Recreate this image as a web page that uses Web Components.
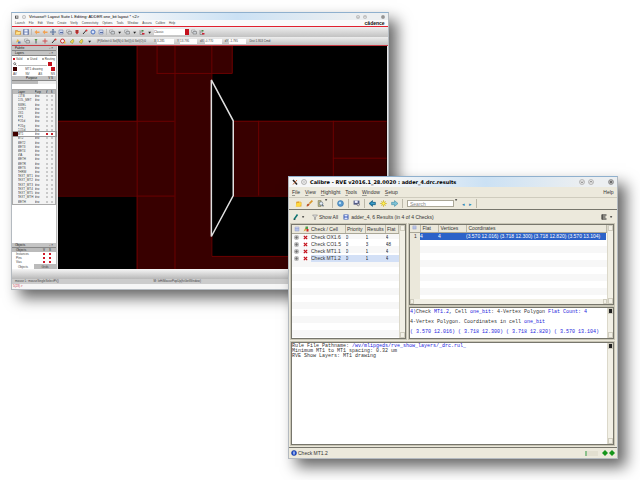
<!DOCTYPE html>
<html lang="en">
<head>
<meta charset="utf-8">
<title>Calibre RVE</title>
<style>
    body{
        margin:0;
        min-height:100vh;
        background:#fff;
        overflow:hidden;
    }
</style>
</head>
<body>
<desk-top></desk-top>

<script>
const BASE = `
    *{box-sizing:border-box;}
    button,input,select{
        font:inherit;
        color:inherit;
        margin:0;
        padding:0;
        border:0;
        background:none;
        border-radius:0;
        appearance:none;
        min-width:0;
        white-space:nowrap;
    }
    table{border-collapse:collapse;border-spacing:0;}
    th,td{padding:0;font-weight:normal;text-align:left;white-space:nowrap;overflow:hidden;}
`;

const ICONS = {
    ring: '<circle cx="6" cy="6" r="5" fill="#eee" stroke="#777"/><circle cx="6" cy="6" r="2" fill="#ccc"/>',
    folder: '<path d="M1 3h4l1 2h5v6H1z" fill="#f0b84c" stroke="#c07a20"/><path d="M3 6h8l-2 5H1z" fill="#ffe28a"/>',
    disk: '<path d="M1 1h10v10H1z" fill="#7f93c4" stroke="#44558a"/><path d="M3 1h6v4H3zM3 7h6v4H3z" fill="#edf1fa"/>',
    back: '<path d="M1 6l5-4v3h5v3H6v3z" fill="#f2a150"/>',
    move: '<path d="M6 0v12M0 6h12" stroke="#56709c" stroke-width="2"/><path d="M4 3l2-3 2 3M4 9l2 3 2-3" fill="none" stroke="#56709c"/>',
    box: '<path d="M2 2h8v8H2z" fill="#cfd8ee" stroke="#6377a5"/><path d="M4 7h6" stroke="#5a6fa4" stroke-width="2"/>',
    pin: '<path d="M3 2h6v5l-3 4-3-4z" fill="#c8202a"/><path d="M5 3h2v4H5z" fill="#753"/>',
    pencil: '<path d="M2 10L9 2" stroke="#333" stroke-width="2"/><circle cx="9" cy="3" r="2" fill="#d33"/>',
    round: '<circle cx="6" cy="6" r="4" fill="#d9e4fa" stroke="#4a70c0" stroke-width="2"/>',
    layers: '<path d="M1 2h7v5H1z" fill="#e3e6ea" stroke="#888"/><path d="M4 5h7v5H4z" fill="#cdd2d8" stroke="#666"/>',
    tree: '<path d="M2 2v9h7M2 6h6" fill="none" stroke="#666"/><path d="M6 8h5v3H6z" fill="#c23"/><path d="M5 2h4v3H5z" fill="#4a8a4a"/>',
    clock: '<circle cx="5" cy="6" r="4" fill="#f4f4f4" stroke="#c33" stroke-width="2"/><path d="M8 7h3v4H8z" fill="#e6ba3a"/>',
    flag: '<path d="M2 8l6-6 2 4-3 5z" fill="#f0d24c" stroke="#7b8a3c"/>',
    plant: '<path d="M6 11V5" stroke="#556" stroke-width="2"/><path d="M3 2h6l-3 5z" fill="#5b9a50"/>',
    shape: '<path d="M2 9l3-7 5 5z" fill="#e8bd52"/><path d="M6 7h5v4H6z" fill="#5b78b8"/>',
    plus: '<path d="M6 1v10M1 6h10" stroke="#c55" stroke-width="2"/>',
    open: '<path d="M2 3l6-1 3 2v7H2z" fill="#e2a12a"/><path d="M1 11l2-6h8l-2 6z" fill="#ffd93d"/><path d="M7 1l3 3-2 1z" fill="#fff4a8"/>',
    brush: '<path d="M6 6l5-5" stroke="#d8972c" stroke-width="3"/><path d="M1 11c0-4 2-5 5-5 1 3-2 5-5 5z" fill="#b9542b"/>',
    find: '<path d="M2 1h5v10H2z" fill="#b9b98a" stroke="#77724e"/><circle cx="7" cy="6" r="3" fill="#e6eef6" stroke="#567"/><path d="M9 8l2 3" stroke="#567" stroke-width="2"/>',
    info: '<circle cx="6" cy="6" r="5" fill="#5b9cd0" stroke="#2e6da6"/><circle cx="5" cy="5" r="2" fill="#b9dcf4"/>',
    save: '<path d="M1 1h10v7H1z" fill="#515a86"/><path d="M3 1h5v4H3z" fill="#eef"/><circle cx="9" cy="8" r="2" fill="#dde" stroke="#555"/>',
    left: '<path d="M0 6l6-5v3h5v4H6v3z" fill="#1d7fae" stroke="#0f567b"/><path d="M3 6l3-2v1h4v1z" fill="#63c1e4"/>',
    sun: '<path d="M6 0v12M0 6h12M2 2l8 8M10 2l-8 8" stroke="#d2b013"/><circle cx="6" cy="6" r="3" fill="#fff25a" stroke="#c3a516"/>',
    right: '<path d="M12 6L6 1v3H1v4h5v3z" fill="#7cc2d6" stroke="#418ca5"/>',
    marker: '<path d="M2 11L9 1" stroke="#0c7270" stroke-width="3"/><path d="M1 11h4" stroke="#111"/>',
    funnel: '<path d="M1 2h10L7 6v5H5V6z" fill="#ddd" stroke="#777"/>',
    cell: '<path d="M1 1h10v10H1z" fill="#3858b5"/><path d="M3 2h6v3H3zM3 7h6v3H3z" fill="#dfe7ff"/>',
    menu: '<path d="M2 1v10M2 2h9M2 6h7M2 10h9" stroke="#222" stroke-width="2" fill="none"/>',
    expand: '<path d="M2 2h8v8H2z" fill="#ddd" stroke="#555"/><path d="M6 2v8M2 6h8" stroke="#333"/>',
    cross: '<path d="M2 2l8 8M10 2l-8 8" stroke="#c5121c" stroke-width="3"/>',
    sheet: '<path d="M2 2h8v8H2z" fill="#cbd5f2" stroke="#95a0cc"/><path d="M2 5h8M2 8h8" stroke="#8190c5"/>',
    mixed: '<path d="M1 11l4-8 2 5z" fill="#d9a33a"/><path d="M5 1h5v5H5z" fill="#4a9a4a"/><path d="M7 6h4v5H7z" fill="#c22"/>',
    status: '<circle cx="6" cy="6" r="5" fill="#1f4fd0" stroke="#0e2f88"/><path d="M6 3v6" stroke="#fff" stroke-width="2"/>',
    diamond: '<path d="M6 0l6 6-6 6-6-6z" fill="#15951b"/>',
    down: '<path d="M3 4h7L6 9z" fill="#222"/>',
    min: '<circle cx="6" cy="6" r="5" fill="#e6e6e6" stroke="#888"/><path d="M4 5l2 3 2-3" fill="none" stroke="#444"/>',
    max: '<circle cx="6" cy="6" r="5" fill="#e6e6e6" stroke="#888"/><path d="M4 7l2-3 2 3" fill="none" stroke="#444"/>',
    close: '<circle cx="6" cy="6" r="5" fill="#b4b4b4" stroke="#666"/><path d="M4 4l4 4M8 4l-4 4" stroke="#222"/>',
    app: '<path d="M0 2h10v9H0z" fill="#555"/><path d="M3 4h5v4H3z" fill="#ddd"/>',
    calibre: '<path d="M2 2l8 9" stroke="#222" stroke-width="3"/><path d="M10 2l-8 9" stroke="#c66a3a" stroke-width="2"/>',
    lens: '<circle cx="5" cy="5" r="3" fill="none" stroke="#444" stroke-width="2"/><path d="M7 7l4 4" stroke="#444" stroke-width="2"/>'
};

class IconGlyph extends HTMLElement {

    constructor() {
        super();
        this.shadow = this.attachShadow({mode: 'open'});
    }

    connectedCallback() {
        this.shadow.innerHTML = `
        <style>
            :host{display:inline-block;width:6px;height:6px;flex:none;}
            svg{display:block;width:100%;height:100%;}
        </style>
        <svg viewBox="0 0 12 12" aria-hidden="true">${ICONS[this.getAttribute('name')] || ''}</svg>`;
    }
}
customElements.define('icon-glyph', IconGlyph);

const iconButtons = (names) => names.split(' ').map(n => n === '|' ? '<span class="sep"></span>' :
    `<button aria-label="${n}"${n === 'down' ? ' class="drop"' : ''}><icon-glyph name="${n}"></icon-glyph></button>`).join('');

class MenuBar extends HTMLElement {

    constructor() {
        super();
        this.shadow = this.attachShadow({mode: 'open'});
    }

    connectedCallback() {
        const items = this.getAttribute('items').split(' ');
        const mark = this.hasAttribute('underline');
        this.shadow.innerHTML = `
        <style>
            ${BASE}
            :host{display:flex;align-items:center;gap:var(--menu-gap,4px);}
            u{text-decoration-thickness:1px;text-decoration-color:#9a9890;}
            .end{margin-left:auto;}
        </style>
        ${items.map(i => `<button>${mark ? `<u>${i[0]}</u>${i.slice(1)}` : i}</button>`).join('')}
        <span class="end"><slot></slot></span>`;
    }
}
customElements.define('menu-bar', MenuBar);

class AppWindow extends HTMLElement {

    constructor() {
        super();
        this.shadow = this.attachShadow({mode: 'open'});
        this.shadow.innerHTML = `
        <style>
            ${BASE}
            :host{
                display:flex;
                flex-direction:column;
                box-shadow:8px 8px 14px rgba(0,0,0,.6);
                border:1px solid #b4bac0;
                border-top-color:#8fb0ce;
                font-family:"Liberation Sans",sans-serif;
            }
            header{
                display:flex;
                align-items:center;
                gap:3px;
                flex:none;
                height:var(--title-height);
                padding:0 3px;
                color:#000;
                background:linear-gradient(90deg,#f6f7f8 0 30%,#cbe1f4 60%,#eceff1 90%);
            }
            .title{flex:1;white-space:nowrap;}
            .body{flex:1;min-height:0;display:flex;flex-direction:column;}
            button{display:flex;}
            button icon-glyph{width:var(--control,6px);height:var(--control,6px);}
            .wide{width:8px;}
        </style>
        <header>
            <slot name="icon"></slot>
            <span class="title"><slot name="title"></slot></span>
            ${iconButtons('min max')}<span class="wide"></span>${iconButtons('close')}
        </header>
        <div class="body"><slot></slot></div>`;
    }
}
customElements.define('app-window', AppWindow);

class LayoutCanvas extends HTMLElement {

    constructor() {
        super();
        this.shadow = this.attachShadow({mode: 'open'});
        this.shadow.innerHTML = `
        <style>
            :host{display:block;flex:1;min-width:0;background:#000;}
            svg{display:block;width:100%;height:100%;}
        </style>
        <svg viewBox="0 0 330 224" preserveAspectRatio="none">
            <path fill="#380000" d="M79 0h96v27h-21v184h176v13H79V150H0V75h79zM176 75h154v75H176z"/>
            <g fill="none" stroke="#6c0000">
                <path d="M79.500 0v224M117.500 0v224M99.500 0v27.500M154.500 0v27M99 27.500h76V0"/>
                <path d="M0 75.500h117M0 150.500h117M176 75.500h154M176 150.500h154M201.500 75v75M276.500 75v75M276 112.500h54M154.500 27v184h176"/>
            </g>
            <path fill="#000" stroke="#e0e0e0" stroke-width="1.500" d="M154 34l22 41v75l-22 41z"/>
        </svg>`;
    }
}
customElements.define('layout-canvas', LayoutCanvas);

class LayerPalette extends HTMLElement {

    constructor() {
        super();
        this.shadow = this.attachShadow({mode: 'open'});
        this.render();
    }

    render() {
        const layers = ['L1TB', 'COL_MET', 'NWEL', 'CONT', 'OX1', 'PP1', 'PO1d', 'PO1g', 'CO1d', 'MT1', 'MT2',
            'MET2', 'MET3', 'MET4', 'VIA', 'METH', 'METR', 'METS', 'THRM', 'TEXT_MT1', 'TEXT_MT2', 'TEXT_MT3',
            'TEXT_MT4', 'TEXT_MT5', 'TEXT_MTH', 'METH'];
        this.shadow.innerHTML = `
        <style>
            ${BASE}
            :host{
                display:flex;
                flex-direction:column;
                width:45px;
                flex:none;
                color:#444;
                background:#fff;
                border-right:1px solid #bbb;
                line-height:4px;
            }
            h2{
                display:flex;
                justify-content:space-between;
                margin:0;
                height:5px;
                padding:0 3px;
                font-size:3px;
                font-weight:normal;
                color:#111;
                background:#c4c4c4;
                border-bottom:1px solid #888;
                flex:none;
            }
            .row{display:flex;align-items:center;justify-content:space-between;gap:1px;height:5px;padding:0 1px;flex:none;}
            .find{padding-right:4px;}
            label{display:flex;align-items:center;gap:1px;}
            input[type=checkbox]{width:2px;height:2px;background:#aaa;}
            input[type=checkbox]:checked{background:#d01828;}
            .red{width:4px;height:4px;background:#c4101c;}
            .swatch{width:4px;height:4px;background:#400000;}
            input[type=search]{flex:1;height:4px;border-bottom:1px solid #bbb;}
            .tabs{background:linear-gradient(90deg,#bbb 60%,#eee 0);height:3px;}
            .gap{height:5px;flex:none;}
            table{width:100%;table-layout:fixed;}
            .layers{height:116px;border:1px solid #aaa;}
            .layers tr{background:#f3f3f3;}
            .layers thead tr,.objects thead tr{background:#bbb;color:#222;}
            .layers tr.on{background:#fff;outline:1px solid #999;}
            .on .pick{background:#c8202a;}
            .on .key{background:#400000;}
            .pick{width:2px;height:2px;background:#c9c9c9;}
            .space{flex:1;}
            .objects td,.objects th{height:4px;padding-left:4px;}
            .objects th+th{padding-left:1px;}
            .objects td+td{padding-left:1px;}
            .foot{display:flex;height:5px;}
            .foot button{flex:1;}
            .foot button+button{background:#bbb;}
        </style>
        <h2><span>Palette</span><span>▫ ×</span></h2>
        <h2><span>Layers</span><span>▫ ×</span></h2>
        <div class="row">
            <label><input type="checkbox" checked>Valid</label>
            <label><input type="checkbox">Used</label>
            <label><input type="checkbox">Routing</label>
        </div>
        <div class="row find"><icon-glyph name="lens" style="width:4px;height:4px"></icon-glyph><input type="search" aria-label="Layer filter"><button class="red" aria-label="Filter"></button></div>
        <div class="row"><span class="swatch"></span><span>MT1 drawing</span><button class="red" aria-label="Layer"></button></div>
        <div class="row"><button>AV</button><button>NV</button><button>AS</button><button>NS</button></div>
        <h2><span></span><span>Purpose</span><span>V S</span></h2>
        <div class="row tabs"></div>
        <div class="gap"></div>
        <table class="layers">
            <colgroup><col style="width:5px"><col><col style="width:11px"><col style="width:5px"><col style="width:5px"></colgroup>
            <thead><tr><th></th><th>Layer</th><th>Purp</th><th>V</th><th>S</th></tr></thead>
            <tbody>${layers.map(n => `<tr${n === 'MT1' ? ' class="on"' : ''}><td class="key"></td><td>${n}</td><td>drw</td><td><div class="pick"></div></td><td><div class="pick"></div></td></tr>`).join('')}</tbody>
        </table>
        <div class="space"></div>
        <h2><span>Objects</span><span>▫ ×</span></h2>
        <table class="objects">
            <colgroup><col><col style="width:6px"><col style="width:8px"></colgroup>
            <thead><tr><th>Objects</th><th>V</th><th>S</th></tr></thead>
            <tbody>
                ${['Instances', 'Pins', 'Vias'].map(n => `<tr><td>${n}</td>${'V S'.split(' ').map(c => `<td><input type="checkbox" checked aria-label="${n} ${c}" style="display:block"></td>`).join('')}</tr>`).join('')}
            </tbody>
        </table>
        <div class="foot"><button>Objects</button><button>Grids</button></div>`;
    }
}
customElements.define('layer-palette', LayerPalette);

class LayoutEditor extends HTMLElement {

    constructor() {
        super();
        this.shadow = this.attachShadow({mode: 'open'});
        this.render();
    }

    render() {
        this.shadow.innerHTML = `
        <style>
            ${BASE}
            :host{
                display:flex;
                flex-direction:column;
                flex:1;
                min-height:0;
                font-size:3px;
                color:#444;
                background:#e6e6e6;
            }
            menu-bar{height:7px;padding:0 3px;--menu-gap:4px;background:#fafafa;border-bottom:1px solid #e0202f;flex:none;}
            .logo{font-weight:bold;color:#111;font-size:5px;}
            .tools{
                display:flex;
                align-items:center;
                gap:2px;
                height:10px;
                padding:0 3px;
                background:linear-gradient(#eee,#c2c2c2);
                flex:none;
                white-space:nowrap;
            }
            .sep{width:1px;height:6px;background:#bbb;}
            .tools.second{height:9px;gap:3px;border-bottom:1px solid #c93a44;}
            .tools button{display:flex;}
            .tools .drop icon-glyph{width:5px;height:5px;}
            .counts{margin:0 5px 0 2px;}
            select{width:35px;height:6px;background:#fff;border-right:4px solid #c4101c;}
            label{display:flex;align-items:center;gap:1px;}
            label input{width:17px;height:5px;background:#fff;}
            .main{display:flex;flex:1;min-height:0;}
            layout-canvas{margin:0 1px;}
            .scroll{height:10px;background:linear-gradient(#f6f6f6,#b8b8b8);flex:none;}
            .hint{display:flex;height:5px;line-height:5px;background:#ccc;padding:0 3px;flex:none;}
            .hint span{flex:1;}
            .hint span:first-child{flex:1.2;}
            .prompt{height:5px;line-height:5px;background:#f6f6f6;color:#c8303c;padding:0 1px;flex:none;}
        </style>
        <menu-bar items="Launch File Edit View Create Verify Connectivity Options Tools Window Assura Calibre Help"><span class="logo">cādence</span></menu-bar>
        <div class="tools">
            ${iconButtons('folder disk | back back move box layers pin pencil round box | layers down layers down tree down')}
            <select aria-label="Workspace"><option>Classic</option></select>
            ${iconButtons('layers tree')}
        </div>
        <div class="tools second">
            ${iconButtons('shape layers plant plus pencil clock flag flag down')}
            <span class="counts">(F)Select:0 Sel(N):0 Sel(I):0 Sel(O):0</span>
            <label>X <input value="3.285"></label>
            <label>Y <input value="13.795"></label>
            <label>dX <input value="-0.770"></label>
            <label>dY <input value="-1.795"></label>
            <span>Dist:1.953 Cmd:</span>
        </div>
        <div class="main"><layer-palette></layer-palette><layout-canvas></layout-canvas></div>
        <div class="scroll"></div>
        <div class="hint"><span>mouse L: mouseSingleSelectPt()</span><span>M: leHiMousePopUp(hiGetWindow)</span><span></span></div>
        <div class="prompt">5(23) &gt;</div>`;
    }
}
customElements.define('layout-editor', LayoutEditor);

class ScrollPane extends HTMLElement {

    constructor() {
        super();
        this.shadow = this.attachShadow({mode: 'open'});
        this.shadow.innerHTML = `
        <style>
            :host{
                display:flex;
                min-width:0;
                min-height:0;
                background:#fff;
                border:1px solid #77766c;
                outline:1px solid #c9c6b6;
            }
            .content{flex:1;min-width:0;overflow:hidden;}
            .bar{
                width:5px;
                flex:none;
                display:flex;
                flex-direction:column;
                justify-content:space-between;
                background:#f2f0e6;
                border-left:1px solid #dbd8ca;
            }
            .bar i{height:4px;border:1px solid #d0cdbf;}
            :host([dark]) .bar i:first-child{background:#222;}
        </style>
        <div class="content"><slot></slot></div>
        <div class="bar"><i></i><i></i></div>`;
    }
}
customElements.define('scroll-pane', ScrollPane);

class ResultsTable extends HTMLElement {

    constructor() {
        super();
        this.shadow = this.attachShadow({mode: 'open'});
        const rows = [['OX1.6', 1, 4], ['CO1.5', 3, 48], ['MT1.1', 1, 4], ['MT1.2', 1, 4]];
        this.shadow.innerHTML = `
        <style>
            ${BASE}
            :host{
                display:block;
                height:100%;
                background:repeating-linear-gradient(#fff 0 7px,#f7f7f7 7px 14px);
            }
            table{width:100%;table-layout:fixed;}
            th{height:8px;background:#ebe8db;border-bottom:1px solid #aaa797;border-right:1px solid #bbb8a9;}
            td{height:7px;line-height:7px;}
            th:nth-child(n+4){padding-left:1px;}
            th:nth-child(-n+2){border-right:0;}
            icon-glyph{display:block;margin-left:2px;}
            td:nth-child(-n+2) icon-glyph{width:5px;height:5px;}
            .on td:nth-child(n+3){background:#d3e0f6;}
        </style>
        <table>
            <colgroup><col style="width:9px"><col style="width:10px"><col><col style="width:20px"><col style="width:20px"><col style="width:13px"></colgroup>
            <thead><tr><th><icon-glyph name="sheet"></icon-glyph></th><th><icon-glyph name="mixed"></icon-glyph></th><th>Check / Cell</th><th>Priority</th><th>Results</th><th>Flat</th></tr></thead>
            <tbody>${rows.map((r, i) => `<tr${i === 3 ? ' class="on"' : ''}><td><icon-glyph name="expand"></icon-glyph></td><td><icon-glyph name="cross"></icon-glyph></td><td>Check ${r[0]}</td><td>0</td><td>${r[1]}</td><td>${r[2]}</td></tr>`).join('')}</tbody>
        </table>`;
    }
}
customElements.define('results-table', ResultsTable);

class VertexTable extends HTMLElement {

    constructor() {
        super();
        this.shadow = this.attachShadow({mode: 'open'});
        this.shadow.innerHTML = `
        <style>
            ${BASE}
            :host{
                display:flex;
                flex-direction:column;
                height:100%;
                background:linear-gradient(90deg,#ebe8db 10px,transparent 0),repeating-linear-gradient(#fff 0 7px,#f7f7f7 7px 14px);
            }
            table{width:100%;table-layout:fixed;}
            th{height:7px;background:#ebe8db;border-bottom:1px solid #aaa797;border-right:1px solid #bbb8a9;padding-left:2px;}
            td{height:7px;line-height:7px;color:#fff;background:#2c62c8;}
            td:first-child{background:none;color:#333;padding-left:4px;}
            .bar{
                margin-top:auto;
                height:5px;
                display:flex;
                justify-content:space-between;
                background:#f2f0e6;
            }
            .bar i{width:4px;border:1px solid #d0cdbf;}
        </style>
        <table>
            <colgroup><col style="width:10px"><col style="width:18px"><col style="width:28px"><col></colgroup>
            <thead><tr><th><icon-glyph name="sheet" style="width:5px;height:5px"></icon-glyph></th><th>Flat</th><th>Vertices</th><th>Coordinates</th></tr></thead>
            <tbody><tr><td>1</td><td>4</td><td>4</td><td>(3.570 12.016) (3.718 12.300) (3.718 12.820) (3.570 13.104)</td></tr></tbody>
        </table>
        <div class="bar"><i></i><i></i></div>`;
    }
}
customElements.define('vertex-table', VertexTable);

class ResultsViewer extends HTMLElement {

    constructor() {
        super();
        this.shadow = this.attachShadow({mode: 'open'});
        this.render();
    }

    render() {
        this.shadow.innerHTML = `
        <style>
            ${BASE}
            :host{
                display:flex;
                flex-direction:column;
                flex:1;
                min-height:0;
                font-size:5px;
                color:#333;
                background:#ece9dc;
            }
            menu-bar{height:10px;padding:0 3px;--menu-gap:5px;flex:none;}
            .tools{
                display:flex;
                align-items:center;
                gap:4px;
                height:13px;
                padding:0 6px;
                border-top:1px solid #cfccbe;
                border-bottom:1px solid #77766c;
                flex:none;
            }
            .tools button{display:flex;}
            .tools icon-glyph{width:7px;height:7px;}
            .tools .drop icon-glyph,.filter .drop icon-glyph{width:4px;height:4px;}
            .tools .drop{margin-left:-4px;align-self:flex-start;}
            .sep{width:1px;height:9px;background:#bbb8a9;}
            input{width:47px;height:7px;background:#fff;border:1px solid #aaa797;padding-left:2px;}
            input::placeholder{color:#888;}
            .nav{color:#2a86b8;}
            .filter{display:flex;align-items:center;gap:2px;height:14px;padding:0 4px;flex:none;}
            .filter button{display:flex;align-items:center;gap:1px;}
            .filter .wide{margin:0 3px 0 5px;}
            .filter .end{margin-left:auto;}
            .panes{
                display:grid;
                grid-template-columns:115px 1fr;
                grid-template-rows:81px 32px;
                gap:2px 3px;
                padding:0 3px 2px 2px;
                flex:none;
            }
            .checks{grid-row:1 / 3;}
            .text{font-family:"Liberation Mono",monospace;}
            .text p{margin:0;line-height:5px;white-space:pre;}
            .message .text{padding-top:1px;}
            .message p{line-height:6px;padding-bottom:4px;}
            .message .points{display:flex;gap:3px;}
            a{color:#1d24dc;text-decoration:none;}
            b{color:#1d24dc;font-weight:normal;}
            .log{flex:1;margin:1px 3px 2px 2px;}
            .log .text{padding-top:1px;}
            footer{
                display:flex;
                align-items:center;
                gap:1px;
                height:11px;
                padding:0 2px;
                border-top:1px solid #77766c;
                flex:none;
            }
            footer span{flex:1;}
            progress{appearance:none;width:13px;height:5px;margin-right:3px;}
            progress::-webkit-progress-bar{background:#e2dfd0;}
            progress::-webkit-progress-value{background:#8cc08c;}
        </style>
        <menu-bar underline items="File View Highlight Tools Window Setup"><button>Help</button></menu-bar>
        <div class="tools">
            ${iconButtons('open brush find down | info | save | left sun right |')}
            <input type="search" placeholder="Search" aria-label="Search">
            ${iconButtons('down')}
            <button class="nav" aria-label="Previous match">◂</button><button class="nav" aria-label="Next match">▸</button><span class="sep"></span>
        </div>
        <div class="filter">
            <button aria-label="Highlight"><icon-glyph name="marker"></icon-glyph></button>${iconButtons('down')}
            <button class="wide"><icon-glyph name="funnel"></icon-glyph>Show All</button>
            <icon-glyph name="cell"></icon-glyph><span>adder_4, 6 Results (in 4 of 4 Checks)</span>
            <button class="end" aria-label="Options"><icon-glyph name="menu"></icon-glyph></button>${iconButtons('down')}
        </div>
        <div class="panes">
            <scroll-pane class="checks"><results-table></results-table></scroll-pane>
            <scroll-pane><vertex-table></vertex-table></scroll-pane>
            <scroll-pane dark class="message"><div class="text">
                <p><b>4)</b>Check <b>MT1.2</b>, Cell <a href="#one_bit">one_bit</a>: 4-Vertex Polygon <b>Flat Count: 4</b></p>
                <p>4-Vertex Polygon. Coordinates in cell <a href="#one_bit">one_bit</a></p>
                <p class="points"><b>( 3.570 12.016)</b><b>( 3.718 12.300)</b><b>( 3.718 12.820)</b><b>( 3.570 13.104)</b></p>
            </div></scroll-pane>
        </div>
        <scroll-pane dark class="log"><div class="text">
            <p>Rule File Pathname: <a href="#rules">/wv/mlipgeds/rve_show_layers/_drc.rul_</a></p>
            <p>Minimum MT1 to MT1 spacing: 0.32 um</p>
            <p>RVE Show Layers: MT1 drawing</p>
        </div></scroll-pane>
        <footer>
            <icon-glyph name="status"></icon-glyph><span>Check MT1.2</span>
            <progress value="20" max="100" aria-label="Progress"></progress>
            <icon-glyph name="diamond"></icon-glyph><icon-glyph name="diamond"></icon-glyph>
        </footer>`;
    }
}
customElements.define('results-viewer', ResultsViewer);

class DeskTop extends HTMLElement {

    constructor() {
        super();
        this.shadow = this.attachShadow({mode: 'open'});
        this.shadow.innerHTML = `
        <style>
            :host{display:block;position:relative;min-height:100vh;}
            app-window{position:absolute;box-sizing:border-box;}
            .editor{left:11px;top:12px;width:59%;height:58%;--title-height:7px;--control:4px;font-size:4px;}
            .viewer{left:45%;top:176px;width:51.5%;height:59%;--title-height:10px;font-size:5px;}
            .viewer [slot=title]{font-family:"DejaVu Sans",sans-serif;font-weight:bold;}
            .editor icon-glyph{width:4px;height:4px;}
        </style>
        <app-window class="editor">
            <icon-glyph slot="icon" name="app"></icon-glyph><icon-glyph slot="icon" name="ring"></icon-glyph>
            <span slot="title">Virtuoso® Layout Suite L Editing: ADDER one_bit layout * &lt;2&gt;</span>
            <layout-editor></layout-editor>
        </app-window>
        <app-window class="viewer">
            <icon-glyph slot="icon" name="calibre"></icon-glyph><icon-glyph slot="icon" name="ring"></icon-glyph>
            <span slot="title">Calibre - RVE v2016.1_28.0020 : adder_4.drc.results</span>
            <results-viewer></results-viewer>
        </app-window>`;
    }
}
customElements.define('desk-top', DeskTop);
</script>
</body>
</html>
